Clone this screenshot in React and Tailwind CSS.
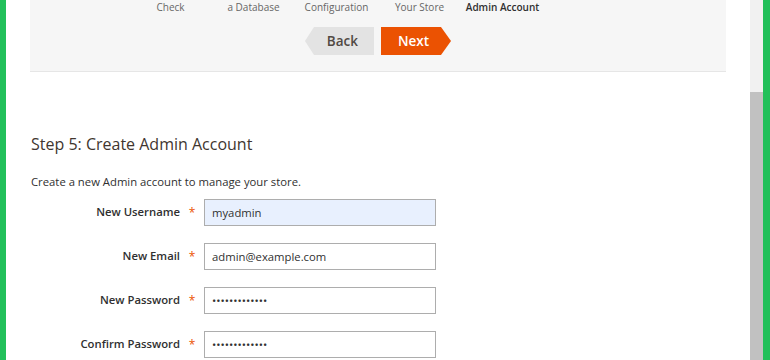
import React from 'react';

const steps = [
  { label: 'Check' },
  { label: 'a Database' },
  { label: 'Configuration' },
  { label: 'Your Store' },
  { label: 'Admin Account', active: true },
  { label: '' },
];

const fields = [
  { label: 'New Username', value: 'myadmin', type: 'text', autofill: true },
  { label: 'New Email', value: 'admin@example.com', type: 'text' },
  { label: 'New Password', value: 'password12345', type: 'password' },
  { label: 'Confirm Password', value: 'password12345', type: 'password' },
];

const App = () => {
  return (
    <div
      className="flex w-[770px] h-[360px] overflow-hidden bg-white text-[#303030]"
      style={{ fontFamily: '"Open Sans", "Liberation Sans", sans-serif' }}
    >
      {/* window edge */}
      <div className="w-[6px] shrink-0 bg-[#22c05a]" />

      <div className="flex-1 overflow-hidden">
        {/* wizard nav */}
        <div className="mx-[24px] h-[72px] bg-[#f6f6f6] border-b border-[#e6e6e6] flex flex-col items-center">
          <div className="flex h-[15px] items-center">
            {steps.map((s, i) => (
              <div
                key={i}
                className={`w-[83px] text-center text-[10px] leading-[15px] ${
                  s.active ? 'text-[#303030] font-semibold' : 'text-[#666]'
                }`}
              >
                {s.label}
              </div>
            ))}
          </div>
          <div className="flex gap-[7px] mt-[12px]">
            <button className="relative h-[28px] w-[69px] flex items-center justify-end pr-[16px] text-[13.5px] font-semibold text-[#514943]">
              <svg className="absolute left-0 top-0" width="69" height="28" viewBox="0 0 69 28">
                <polygon points="0,14 9,0 69,0 69,28 9,28" fill="#e3e3e3" />
              </svg>
              <span className="relative">Back</span>
            </button>
            <button className="relative h-[28px] w-[70px] flex items-center pl-[17px] text-[13.5px] font-semibold text-white">
              <svg className="absolute left-0 top-0" width="70" height="28" viewBox="0 0 70 28">
                <polygon points="0,0 60,0 70,14 60,28 0,28" fill="#eb5202" />
              </svg>
              <span className="relative">Next</span>
            </button>
          </div>
        </div>

        {/* step content */}
        <div className="pl-[25px] pt-[60px]">
          <h2 className="text-[16px] leading-[24px] text-[#41362f]">
            Step 5: Create Admin Account
          </h2>
          <p className="mt-[18px] text-[11.3px] leading-[16px] text-[#303030]">
            Create a new Admin account to manage your store.
          </p>

          <div className="mt-[9px] flex flex-col gap-[17px]">
            {fields.map((f) => (
              <div key={f.label} className="flex items-center">
                <div className="w-[149px] text-right text-[11.3px] font-semibold text-[#303030]">
                  {f.label}
                </div>
                <div className="w-[24px] text-center text-[12px] text-[#eb5202]">*</div>
                <input
                  readOnly
                  type={f.type}
                  value={f.value}
                  className={`w-[232px] h-[27px] px-[7px] border border-[#adadad] text-[11.3px] text-[#303030] outline-none ${
                    f.autofill ? 'bg-[#e8f0fe]' : 'bg-white'
                  }`}
                  style={{ fontFamily: '"Open Sans", "Liberation Sans", sans-serif' }}
                />
              </div>
            ))}
          </div>
        </div>
      </div>

      {/* scrollbar */}
      <div className="w-[13px] shrink-0 bg-[#f1f1f1] flex justify-center pt-[92px]">
        <div className="w-[10px] flex-1 bg-[#c1c1c1]" />
      </div>
      <div className="w-[7px] shrink-0 bg-[#22c05a]" />
    </div>
  );
};

export default App;
